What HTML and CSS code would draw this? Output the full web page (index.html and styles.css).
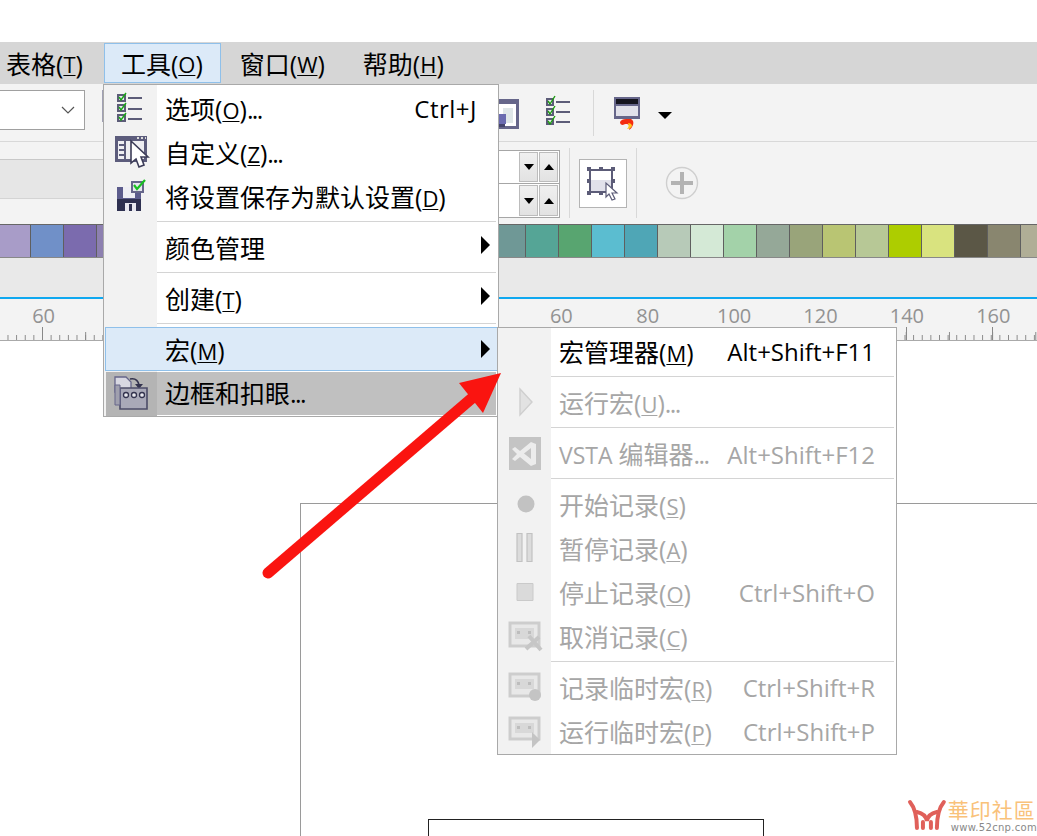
FILE: index.html
```html
<!DOCTYPE html>
<html lang="zh-CN">
<head>
  <meta charset="UTF-8" />
  <title>工具菜单</title>
  <link rel="stylesheet" href="styles.css">
</head>
<body>
  <div class="app">
    <div class="top-gap"></div>

    <nav class="menubar">
      <div class="menubar-item first">表格(<u>T</u>)</div>
      <div class="menubar-item open">工具(<u>O</u>)</div>
      <div class="menubar-item">窗口(<u>W</u>)</div>
      <div class="menubar-item">帮助(<u>H</u>)</div>
    </nav>

    <div class="toolbar">
      <div class="combo">
        <svg width="14" height="8" viewBox="0 0 14 8"><path d="M1 1l6 6 6-6" fill="none" stroke="#555" stroke-width="1.2"/></svg>
      </div>
      <div class="sliver"></div>
      <svg class="tb-page" width="22" height="30" viewBox="0 0 22 30">
        <path d="M0 0h22v30H0z" fill="#66668a"/>
        <path d="M0 5h19v22H0z" fill="#fff"/>
        <path d="M6 9h10v15H6z" fill="#dfe6e8"/>
        <path d="M0 15h9v10H0z" fill="#6b6bb0"/>
        <path d="M0 25h8v3H0z" fill="#44446c"/>
      </svg>
      <svg class="tb-list" width="24" height="30" viewBox="0 0 24 30">
        <g fill="#5c5c78">
          <rect x="0" y="3" width="8" height="8"/><rect x="0" y="13" width="8" height="8"/><rect x="0" y="23" width="8" height="7"/>
          <rect x="10" y="6" width="14" height="2"/><rect x="10" y="16" width="14" height="2"/><rect x="10" y="26" width="14" height="2"/>
        </g>
        <g fill="#e8e8f0"><rect x="2" y="5" width="4" height="4"/><rect x="2" y="15" width="4" height="4"/><rect x="2" y="25" width="4" height="3"/></g>
        <g fill="none" stroke="#1c9a10" stroke-width="1.4">
          <path d="M2 6l2 3 5-8"/><path d="M2 16l2 3 5-8"/><path d="M2 26l2 3 5-8"/>
        </g>
      </svg>
      <div class="tb-sep"></div>
      <svg class="tb-fire" width="28" height="33" viewBox="0 0 28 33">
        <path d="M1 0h26v22H1z" fill="#66668a"/>
        <path d="M3 2h22v5H3z" fill="#15151f"/>
        <path d="M3 9h22v10H3z" fill="#e1e1ea"/>
        <path d="M7 25c1-2 3-3 6-3h5c2 1 3 3 2 6-1 2-2 4-4 5 1-3 0-6-2-6-2 0-3 0-4 1-2 0-3-1-3-3z" fill="#f42c10"/>
        <path d="M14 32c2-2 2-4 1-6 2 0 4 1 4 3-1 2-3 3-5 3z" fill="#ffc81e"/>
      </svg>
      <div class="tb-drop"></div>
    </div>

    <div class="propbar">
      <div class="prop-band"></div>
      <div class="spinner">
        <div class="spin-row"><div class="spin-btn"><i class="tri-down"></i></div><div class="spin-btn"><i class="tri-up"></i></div></div>
        <div class="spin-row"><div class="spin-btn"><i class="tri-down"></i></div><div class="spin-btn"><i class="tri-up"></i></div></div>
      </div>
      <div class="prop-sep"></div>
      <div class="select-btn">
        <svg width="32" height="34" viewBox="0 0 32 34">
          <path d="M3 3h22v22H3z" fill="#e1e1ea" stroke="#5c5c78" stroke-width="2"/>
          <path d="M4 4h20v9H4z" fill="#fff"/>
          <g fill="#5c5c78"><rect x="0" y="0" width="4" height="4"/><rect x="12" y="0" width="4" height="4"/><rect x="24" y="0" width="4" height="4"/><rect x="0" y="12" width="4" height="4"/><rect x="24" y="12" width="4" height="4"/><rect x="0" y="24" width="4" height="4"/><rect x="12" y="24" width="4" height="4"/></g>
          <path d="M19 16v14l3-3 3 6 3-1-3-6h5z" fill="#fff" stroke="#5c5c78" stroke-width="1.2"/>
        </svg>
      </div>
      <div class="prop-sep"></div>
      <svg class="plus" width="34" height="34" viewBox="0 0 34 34">
        <circle cx="17" cy="17" r="15.5" fill="none" stroke="#cfcfcf" stroke-width="1.4"/>
        <path d="M15 6h4v9h9v4h-9v9h-4v-9H6v-4h9z" fill="#b3b3b3"/>
      </svg>
    </div>

    <div class="palette">
      <div class="swatch" style="background:#a89cc8"></div>
      <div class="swatch" style="background:#7090c8"></div>
      <div class="swatch" style="background:#7b6bae"></div>
      <div class="swatch" style="background:#8d80b0"></div>
      <div class="swatch" style="background:#8d80b0"></div>
      <div class="swatch" style="background:#8d80b0"></div>
      <div class="swatch" style="background:#8d80b0"></div>
      <div class="swatch" style="background:#8d80b0"></div>
      <div class="swatch" style="background:#8d80b0"></div>
      <div class="swatch" style="background:#8d80b0"></div>
      <div class="swatch" style="background:#8d80b0"></div>
      <div class="swatch" style="background:#8d80b0"></div>
      <div class="swatch" style="background:#8d80b0"></div>
      <div class="swatch" style="background:#8d80b0"></div>
      <div class="swatch" style="background:#8d80b0"></div>
      <div class="swatch" style="background:#6f9896"></div>
      <div class="swatch" style="background:#55a596"></div>
      <div class="swatch" style="background:#58a570"></div>
      <div class="swatch" style="background:#5bbdd0"></div>
      <div class="swatch" style="background:#4fa6b6"></div>
      <div class="swatch" style="background:#b7cab8"></div>
      <div class="swatch" style="background:#d4e9d6"></div>
      <div class="swatch" style="background:#a3d2a9"></div>
      <div class="swatch" style="background:#95a898"></div>
      <div class="swatch" style="background:#99a47a"></div>
      <div class="swatch" style="background:#b9c573"></div>
      <div class="swatch" style="background:#b7c896"></div>
      <div class="swatch" style="background:#adcd00"></div>
      <div class="swatch" style="background:#d9e37f"></div>
      <div class="swatch" style="background:#5b5746"></div>
      <div class="swatch" style="background:#89866f"></div>
      <div class="swatch" style="background:#b0ae96"></div>
    </div>

    <div class="band"></div>

    <div class="ruler">
      <span>60</span><span></span><span></span><span></span><span></span><span></span>
      <span>60</span><span>80</span><span>100</span><span>120</span><span>140</span><span>160</span>
    </div>

    <div class="canvas">
      <div class="page"></div>
      <div class="inner-box"></div>
      <div class="watermark">
        <svg width="40" height="32" viewBox="0 0 40 32">
          <g fill="none" stroke="#e0605a" stroke-width="4" stroke-linecap="round">
            <path d="M3 3c5 6 7 14 7 26"/>
            <path d="M37 3c-5 6-7 14-7 26"/>
            <path d="M10 13c5 1 9 4 10 9 1-5 5-8 10-9"/>
            <path d="M16 29v-6M24 29v-6"/>
          </g>
        </svg>
        <div class="wm-text">
          <div class="wm-name">華印社區</div>
          <div class="wm-url">www.52cnp.com</div>
        </div>
      </div>
    </div>
  </div>

  <!-- 工具 menu -->
  <div class="menu tools-menu">
    <div class="group first">
      <div class="item">
        <svg class="icon" width="53" height="44" viewBox="0 -1 53 44">
          <g fill="#5c5c78">
            <rect x="13" y="6" width="9" height="8"/><rect x="13" y="16" width="9" height="8"/><rect x="13" y="26" width="9" height="8"/>
            <rect x="24" y="9" width="14" height="2"/><rect x="24" y="20" width="14" height="2"/><rect x="24" y="30" width="14" height="2"/>
          </g>
          <g fill="#eaeaf2"><rect x="15" y="8" width="5" height="4"/><rect x="15" y="18" width="5" height="4"/><rect x="15" y="28" width="5" height="4"/></g>
          <g fill="none" stroke="#1ca818" stroke-width="1.5">
            <path d="M15 9l2 3 5-7"/><path d="M15 19l2 3 5-7"/><path d="M15 29l2 3 5-7"/>
          </g>
        </svg>
        <span class="label">选项(<u>O</u>)<span class="dots">...</span></span><span class="keys wide">Ctrl+J</span>
      </div>
      <div class="item">
        <svg class="icon" width="53" height="44" viewBox="0 -1 53 44">
          <path d="M11 4h32v26H11z" fill="#5c5c7c"/>
          <path d="M14 9h6v18h-6zM22 9h18v18H22z" fill="#eeeef2"/>
          <path d="M15 12h5v2h-5zM15 17h5v2h-5zM15 22h5v2h-5z" fill="#5c5c7c"/>
          <path d="M33 5h2v2h-2zM37 5h2v2h-2zM41 5h1v2h-1z" fill="#ddd"/>
          <path d="M27 9v22l5-4 3 8 5-2-3-8h7z" fill="#fff" stroke="#3c3c58" stroke-width="1.6"/>
        </svg>
        <span class="label">自定义(<u>Z</u>)<span class="dots">...</span></span>
      </div>
      <div class="item">
        <svg class="icon" width="53" height="44" viewBox="0 -1 53 44">
          <path d="M13 11h24v12H13z" fill="#5c5c8c"/>
          <path d="M13 23h24v12H13z" fill="#2e3050"/>
          <path d="M19 11h12v11H19z" fill="#eeeef4"/>
          <path d="M21 27h11v8H21z" fill="#e8e8f0"/>
          <path d="M25 28h3v7h-3z" fill="#2e3050"/>
          <path d="M28 6h11v10H28z" fill="#e6e6ee" stroke="#66668a" stroke-width="2"/>
          <path d="M30 9l3 4 8-9" fill="none" stroke="#18c020" stroke-width="2.2"/>
        </svg>
        <span class="label">将设置保存为默认设置(<u>D</u>)</span>
      </div>
    </div>
    <div class="sep"></div>
    <div class="item tall"><span class="icon"></span><span class="label">颜色管理</span><i class="sub-arrow"></i></div>
    <div class="sep"></div>
    <div class="item tall"><span class="icon"></span><span class="label">创建(<u>T</u>)</span><i class="sub-arrow"></i></div>
    <div class="sep"></div>
    <div class="item hover"><span class="icon"></span><span class="label">宏(<u>M</u>)</span><i class="sub-arrow"></i></div>
    <div class="item pressed">
      <svg class="icon" width="51" height="44" viewBox="0 0 51 44">
        <path d="M9 5h11l5 5v10H9z" fill="#d8d8e2" stroke="#66668a" stroke-width="1.3"/>
        <path d="M24 7c5-1 8 1 9 6" fill="none" stroke="#33334e" stroke-width="1.6"/>
        <path d="M29 12h8l-4 5z" fill="#33334e"/>
        <path d="M14 16h27v21H14z" fill="#a9a9b8" stroke="#4c4c68" stroke-width="1.6"/>
        <path d="M9 13h5v20H9z" fill="#a0a0ae" stroke="#66668a"/>
        <g fill="#e8e8ee" stroke="#33334e" stroke-width="1.3"><circle cx="20" cy="23" r="2.500"/><circle cx="28" cy="23" r="2.500"/><circle cx="36" cy="23" r="2.500"/></g>
      </svg>
      <span class="label">边框和扣眼<span class="dots">...</span></span>
    </div>
  </div>

  <!-- 宏 submenu -->
  <div class="menu macro-menu">
    <div class="group first">
      <div class="item"><span class="icon"></span><span class="label">宏管理器(<u>M</u>)</span><span class="keys">Alt+Shift+F11</span></div>
    </div>
    <div class="sep"></div>
    <div class="item tall off">
      <svg class="icon" width="53" height="50" viewBox="0 0 53 50">
        <path d="M22 12l12 13-12 13z" fill="#e2e2e2" stroke="#cfcfcf" stroke-width="1.4"/>
      </svg>
      <span class="label">运行宏(<u>U</u>)<span class="dots">...</span></span>
    </div>
    <div class="sep"></div>
    <div class="item tall off">
      <svg class="icon" width="53" height="50" viewBox="0 0 53 50">
        <path d="M11 9h32v33H11z" fill="#c4c4c4"/>
        <path d="M33 14l-11 9-5-4-3 2 5 5-5 5 3 2 5-4 11 9 5-2V16zm0 6v11l-7-5.500z" fill="#ececec"/>
      </svg>
      <span class="label"><span class="latin">VSTA </span>编辑器<span class="dots">...</span></span><span class="keys">Alt+Shift+F12</span>
    </div>
    <div class="sep"></div>
    <div class="group rec">
      <div class="item off">
        <svg class="icon soft" width="53" height="44" viewBox="0 0 53 44"><circle cx="28" cy="21" r="8.500" fill="#c2c2c2"/></svg>
        <span class="label">开始记录(<u>S</u>)</span>
      </div>
      <div class="item off">
        <svg class="icon soft" width="53" height="44" viewBox="0 0 53 44">
          <path d="M19 6.500h5v28h-5zM29 6.500h5v28h-5z" fill="#dcdcdc" stroke="#c2c2c2" stroke-width="1.2"/>
        </svg>
        <span class="label">暂停记录(<u>A</u>)</span>
      </div>
      <div class="item off">
        <svg class="icon soft" width="53" height="44" viewBox="0 0 53 44"><path d="M19 12.500h16v17H19z" fill="#dadada" stroke="#cacaca"/></svg>
        <span class="label">停止记录(<u>O</u>)</span><span class="keys">Ctrl+Shift+O</span>
      </div>
      <div class="item off">
        <svg class="icon soft" width="53" height="44" viewBox="0 0 53 44">
          <path d="M12 8h29v23H12z" fill="#e8e8e8" stroke="#cdcdcd" stroke-width="3"/>
          <path d="M17 13h19v11H17z" fill="#d8d8d8"/>
          <path d="M19 16h3v3h-3zM30 16h3v3h-3z" fill="#bdbdbd"/>
          <path d="M28 34l13-12M31 21l12 14" stroke="#c6c6c6" stroke-width="4"/>
        </svg>
        <span class="label">取消记录(<u>C</u>)</span>
      </div>
    </div>
    <div class="sep"></div>
    <div class="group rec">
      <div class="item off">
        <svg class="icon soft" width="53" height="44" viewBox="0 0 53 44">
          <path d="M12 8h29v22H12z" fill="#e8e8e8" stroke="#cdcdcd" stroke-width="3"/>
          <path d="M17 13h19v10H17z" fill="#d8d8d8"/>
          <path d="M19 16h3v3h-3zM30 16h3v3h-3z" fill="#bdbdbd"/>
          <circle cx="37" cy="29" r="6" fill="#c4c4c4"/>
        </svg>
        <span class="label">记录临时宏(<u>R</u>)</span><span class="keys">Ctrl+Shift+R</span>
      </div>
      <div class="item off">
        <svg class="icon soft" width="53" height="44" viewBox="0 0 53 44">
          <path d="M12 8h29v21H12z" fill="#e8e8e8" stroke="#cdcdcd" stroke-width="3"/>
          <path d="M17 13h19v10H17z" fill="#d8d8d8"/>
          <path d="M19 16h3v3h-3zM30 16h3v3h-3z" fill="#bdbdbd"/>
          <path d="M34 22l8 8-8 8z" fill="#c4c4c4"/>
        </svg>
        <span class="label">运行临时宏(<u>P</u>)</span><span class="keys">Ctrl+Shift+P</span>
      </div>
    </div>
  </div>

  <!-- red annotation arrow -->
  <svg class="arrow" width="1037" height="836" viewBox="0 0 1037 836">
    <path d="M268 573L478 393" fill="none" stroke="#fa1410" stroke-width="11" stroke-linecap="round"/>
    <path d="M501 373L459 383 483 413z" fill="#fa1410"/>
  </svg>
</body>
</html>
```
FILE: styles.css
```css
* {
  box-sizing: border-box;
}

body {
  margin: 0;
  width: 1037px;
  height: 836px;
  overflow: hidden;
  position: relative;
  background: #fff;
  color: #000;
  font-family: "Open Sans", "Noto Sans CJK SC", sans-serif;
  font-size: 25px;
  line-height: 1;
}

u {
  font-size: 22px;
  text-underline-offset: 2px;
  text-decoration-thickness: 1px;
}

.dots {
  letter-spacing: -1.6px;
}

.latin {
  font-size: 23px;
}

.app {
  display: flex;
  flex-direction: column;
  height: 836px;
  overflow: hidden;
}

.top-gap {
  flex: none;
  height: 42px;
}

/* Menu bar */
.menubar {
  display: flex;
  flex: none;
  height: 42px;
  background: #d6d6d6;
}

.menubar-item {
  display: flex;
  align-items: center;
  padding: 2px 18px 0;
  margin-top: 1px;
  height: 40px;
  border: 1px solid transparent;
  white-space: pre;
}

.menubar-item.first {
  padding-left: 5px;
  margin-right: 2px;
}

.menubar-item.open {
  padding: 2px 17px 0 16px;
  background: #dceaf8;
  border-color: #8fc0ea;
}

/* Toolbars */
.toolbar {
  display: flex;
  flex: none;
  align-items: center;
  height: 58px;
  background: #f3f3f3;
  border-bottom: 1px solid #d8d8d8;
}

.combo {
  display: flex;
  align-items: center;
  justify-content: flex-end;
  width: 85px;
  height: 40px;
  margin-top: -6px;
  padding-right: 9px;
  background: #fff;
  border: 1px solid #a0a0a0;
  border-left: none;
}

.sliver {
  width: 4px;
  height: 32px;
  margin-left: 17px;
  margin-top: -13px;
  background: #a0a0b4;
}

.tb-page {
  margin-left: 391px;
  margin-top: 3px;
}

.tb-list {
  margin-left: 27px;
  margin-top: -5px;
}

.tb-sep {
  width: 1px;
  height: 46px;
  margin-left: 23px;
  background: #d8d8d8;
}

.tb-fire {
  margin-left: 19px;
  margin-top: 2px;
}

.tb-drop {
  margin-left: 17px;
  margin-top: 6px;
  border-top: 7px solid #000;
  border-left: 7px solid transparent;
  border-right: 7px solid transparent;
}

.propbar {
  display: flex;
  flex: none;
  align-items: flex-start;
  height: 82px;
  background: #f3f3f3;
}

.prop-band {
  width: 103px;
  height: 40px;
  margin-top: 17px;
  background: #e6e6e6;
  border-top: 1px solid #c8c8c8;
  border-bottom: 1px solid #d4d4d4;
}

.spinner {
  display: flex;
  flex-direction: column;
  width: 457px;
  height: 68px;
  margin-top: 8px;
  background: #fff;
  border: 1px solid #a6a6a6;
}

.spin-row {
  display: flex;
  justify-content: flex-end;
  gap: 1px;
  height: 33px;
  padding: 1px 1px 1px 0;
  border-bottom: 1px solid #a6a6a6;
}

.spin-row:last-child {
  border-bottom: none;
}

.spin-btn {
  display: flex;
  align-items: center;
  justify-content: center;
  width: 19px;
  background: linear-gradient(#f0f0f0, #e2e2e2);
  border: 1px solid #bcbcbc;
}

.tri-down {
  border-top: 6px solid #000;
  border-left: 5px solid transparent;
  border-right: 5px solid transparent;
}

.tri-up {
  border-bottom: 6px solid #000;
  border-left: 5px solid transparent;
  border-right: 5px solid transparent;
}

.prop-sep {
  width: 1px;
  height: 70px;
  margin-left: 9px;
  margin-top: 6px;
  background: #d8d8d8;
}

.select-btn {
  display: flex;
  align-items: center;
  justify-content: center;
  width: 48px;
  height: 49px;
  margin-left: 9px;
  margin-top: 17px;
  background: #fff;
  border: 1px solid #b4b4b4;
}

.plus {
  margin-left: 28px;
  margin-top: 24px;
}

/* Colour palette */
.palette {
  display: flex;
  flex: none;
  height: 34px;
  overflow: hidden;
  border-top: 1px solid #666;
  border-bottom: 1px solid #888;
}

.swatch {
  flex: none;
  width: 33px;
  border-right: 1px solid #5f5f5f;
}

.swatch:first-child {
  width: 31px;
}

.band {
  flex: none;
  height: 39px;
  background: #e9e9e9;
}

/* Ruler */
.ruler {
  display: flex;
  flex: none;
  height: 44px;
  overflow: hidden;
  border-top: 2px solid #0fa8f0;
  border-bottom: 1px solid #aaa;
  background-color: #f3f3f3;
  background-image:
    linear-gradient(to right, #888 1px, transparent 1px),
    linear-gradient(to right, #888 1px, transparent 1px);
  background-size: 8.64px 5px, 43.2px 8px;
  background-position: 42px 100%, 42px 100%;
  background-repeat: repeat-x;
  color: #929292;
  font-size: 20px;
}

.ruler span {
  position: relative;
  flex: none;
  width: 86.4px;
  padding-top: 7px;
  padding-left: 2px;
  text-align: center;
}

.ruler span:first-child {
  width: 85.2px;
}

.ruler span::after {
  content: "";
  position: absolute;
  left: 43px;
  bottom: 0;
  height: 13px;
  width: 1px;
  background: #888;
}

.ruler span:first-child::after {
  left: 42px;
}

/* Canvas */
.canvas {
  position: relative;
  flex: 1;
  overflow: hidden;
  background: #fff;
}

.page {
  position: absolute;
  left: 300px;
  top: 162px;
  width: 800px;
  height: 400px;
  border: 1px solid #9a9a9a;
}

.inner-box {
  position: absolute;
  left: 428px;
  top: 478px;
  width: 336px;
  height: 100px;
  border: 1px solid #222;
}

.watermark {
  position: absolute;
  left: 907px;
  top: 458px;
  display: flex;
  gap: 1px;
  width: 130px;
}

.wm-name {
  color: #f9c27a;
  font-family: "Noto Sans CJK TC", sans-serif;
  font-size: 21px;
  letter-spacing: 1px;
  white-space: nowrap;
}

.wm-url {
  margin-top: 3px;
  padding-left: 3px;
  color: #888;
  font-family: "DejaVu Sans", sans-serif;
  font-size: 10px;
  letter-spacing: 0.3px;
  white-space: nowrap;
}

/* Dropdown menus */
.menu {
  position: absolute;
  background: linear-gradient(to right, #f2f2f2 53px, #fff 53px);
  border: 1px solid #a9a9a9;
}

.tools-menu {
  left: 103px;
  top: 84px;
  width: 396px;
  height: 333px;
}

.macro-menu {
  left: 497px;
  top: 327px;
  width: 400px;
  height: 428px;
}

.group.first {
  padding: 2px 0;
}

.group.rec {
  padding: 4px 0 2px;
}

.group.rec:last-child {
  padding-bottom: 0;
}

.item {
  display: flex;
  align-items: center;
  height: 44px;
  padding-right: 21px;
  white-space: nowrap;
}

.item.tall {
  height: 50px;
}

.icon {
  flex: none;
  display: block;
  width: 53px;
  align-self: stretch;
}

.icon.soft {
  filter: blur(0.5px);
}

.label {
  padding-left: 8px;
}

.keys {
  margin-left: auto;
  font-size: 24px;
}

.keys.wide {
  letter-spacing: 0.5px;
}

.item.tall .label,
.item.hover .label {
  padding-top: 2px;
}

.macro-menu .item.tall .label,
.macro-menu .item.tall .keys {
  padding-top: 3px;
}

.sep {
  height: 1px;
  margin: 0 2px 0 53px;
  background: #d4d4d4;
}

.sub-arrow {
  margin-left: auto;
  margin-right: -13px;
  border-left: 9px solid #000;
  border-top: 9px solid transparent;
  border-bottom: 9px solid transparent;
}

.item.tall .sub-arrow {
  margin-top: -4px;
}

.item.hover {
  margin: 3px 0 0 1px;
  background: #dceaf8;
  box-shadow: inset 0 0 0 1px #8fc0ea;
}

.item.hover .icon {
  width: 52px;
}

.item.pressed {
  margin: 1px 2px 0;
  height: 43px;
  background: #c0c0c0;
}

.item.pressed .icon {
  width: 51px;
  background: #b4b4b4;
}

.item.off {
  color: #a6a6a6;
}

.arrow {
  position: absolute;
  left: 0;
  top: 0;
  pointer-events: none;
}
```
